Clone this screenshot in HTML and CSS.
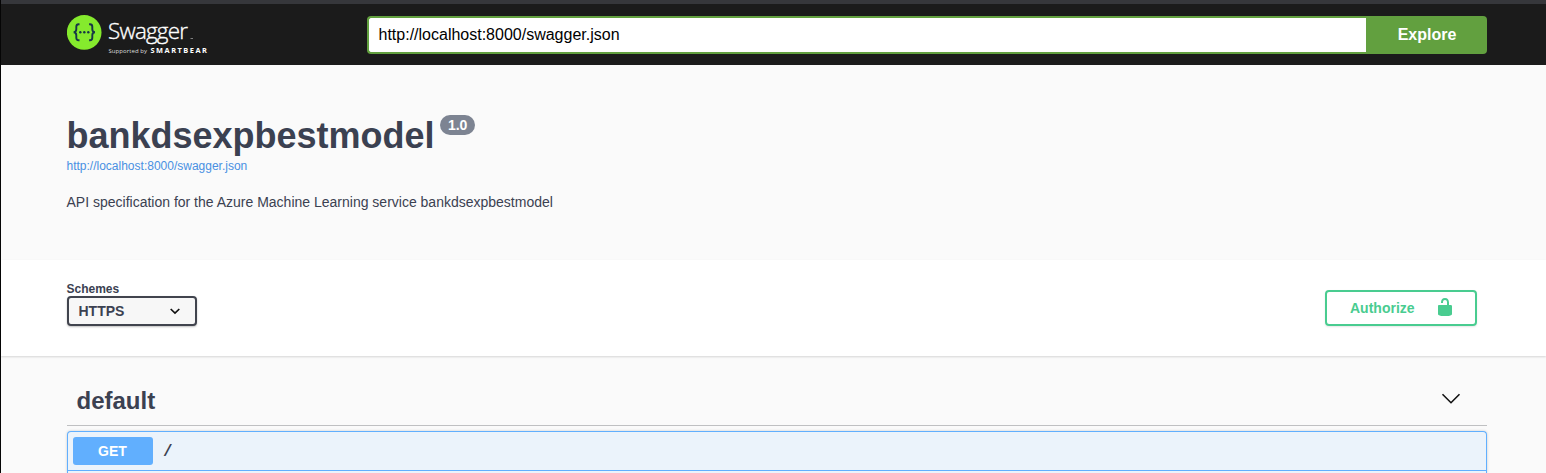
FILE: index.html
```html
<!DOCTYPE html>
<html lang="en">
<head>
<meta charset="utf-8">
<title>Swagger UI</title>
<link rel="stylesheet" href="styles.css">
</head>
<body>
<header class="topbar">
  <div class="wrapper topbar-wrapper">
    <a class="logo" aria-label="Swagger">
      <svg width="150" height="44" viewBox="0 0 150 44">
        <circle cx="17.2" cy="17.4" r="17.3" fill="#85ea2d"/>
        <g fill="none" stroke="#173647" stroke-width="1.9">
          <path d="M12.500 9.300h-.9c-1.700 0-2.300.9-2.300 2.500v2.500c0 1.900-.7 2.800-2.600 3 1.900.2 2.600 1.100 2.600 3v2.500c0 1.600.6 2.500 2.300 2.500h.9"/>
          <path d="M22.100 9.300h.9c1.700 0 2.300.9 2.300 2.500v2.500c0 1.900.7 2.800 2.600 3-1.900.2-2.600 1.100-2.600 3v2.500c0 1.600-.6 2.500-2.300 2.500h-.9"/>
        </g>
        <g fill="#173647"><circle cx="13.300" cy="17.300" r="1.200"/><circle cx="17.300" cy="17.300" r="1.200"/><circle cx="21.300" cy="17.300" r="1.200"/></g>
        <text class="logo-name" x="41" y="24.200" textLength="80">Swagger</text>
        <path d="M123.500 23.500h2.500" stroke="#999" stroke-width=".8"/>
        <text class="logo-by" x="41.500" y="38" textLength="38.500">Supported by</text>
        <text class="logo-brand" x="83.500" y="38" textLength="56.500">SMARTBEAR</text>
      </svg>
    </a>
    <form class="search">
      <div class="url">http://localhost:8000/swagger.json</div>
      <div class="explore">Explore</div>
    </form>
  </div>
</header>
<section class="info">
  <div class="wrapper">
    <h1 class="title"><span class="title-text">bankdsexpbestmodel</span><span class="version">1.0</span></h1>
    <a class="spec-link">http://localhost:8000/swagger.json</a>
    <p class="description">API specification for the Azure Machine Learning service bankdsexpbestmodel</p>
  </div>
</section>
<section class="schemes">
  <div class="wrapper schemes-wrapper">
    <div class="scheme-group">
      <div class="scheme-label">Schemes</div>
      <div class="select">HTTPS
        <svg width="12" height="8" viewBox="0 0 12 8"><path d="M1.700 2 6 6l4.300-4" fill="none" stroke="#111" stroke-width="1.700"/></svg>
      </div>
    </div>
    <div class="authorize"><span>Authorize</span>
      <svg width="20" height="20" viewBox="0 0 20 20"><path fill="#49cc90" d="M15.800 8H14V5.600C14 2.700 12.700 1 10 1 7.200 1 6 2.700 6 5.600V6h2v-.8C8 3.700 8.800 3 10 3c1.200 0 2 .7 2 2.200V8H4c-.6 0-1 .5-1 1.200V17c0 .5.500 1.200 1 1.300l1.400.5c.5.200 1 .2 1.400.2h6.400c.5 0 1 0 1.400-.2l1.400-.5c.5-.1 1-.8 1-1.300V9.200c0-.7-.7-1.200-1.200-1.200z"/></svg>
    </div>
  </div>
</section>
<main class="wrapper operations">
  <h2 class="tag"><span class="tag-text">default</span>
    <svg width="20" height="12" viewBox="0 0 20 12"><path d="M1.500 1.200 10 9.700l8.500-8.500" fill="none" stroke="#111" stroke-width="1.600"/></svg>
  </h2>
  <div class="opblock">
    <div class="summary"><span class="method">GET</span><span class="path">/</span></div>
  </div>
</main>
</body>
</html>
```
FILE: styles.css
```css
* { box-sizing: border-box; }
html { background: #fafafa; }
body {
  margin: 0;
  height: 473px;
  overflow: hidden;
  border-left: 1px solid #050505;
  background: #fafafa;
  color: #3b4151;
  font-family: "Liberation Sans", Arial, sans-serif;
}
.wrapper { margin: 0 59px 0 66px; }
.topbar {
  height: 65px;
  padding-top: 11px;
  border-top: 4px solid #36373b;
  background: #1b1b1b;
}
.topbar-wrapper { display: flex; }
.logo { width: 300px; height: 44px; }
.logo svg { display: block; }
.logo-name { font: 300 22.4px "Open Sans", sans-serif; fill: #fff; stroke: #fff; stroke-width: .35px; }
.logo-by { font: 6px "Open Sans", sans-serif; fill: #ddd; }
.logo-brand { font: 700 7.4px "Open Sans", sans-serif; fill: #fff; }
.search { display: flex; flex: 1; height: 38px; margin-top: 1px; }
.url {
  flex: 1;
  border: 2px solid #62a03f;
  border-right: 0;
  border-radius: 4px 0 0 4px;
  padding-left: 9.5px;
  background: #fff;
  color: #000;
  font-size: 16px;
  line-height: 34px;
}
.explore {
  width: 121px;
  padding-left: 1px;
  border-radius: 0 4px 4px 0;
  background: #62a03f;
  color: #fff;
  font-size: 16px;
  font-weight: bold;
  line-height: 37px;
  text-align: center;
}
.info { height: 195px; padding-top: 50px; }
.info .wrapper { margin-left: 65.5px; }
.title { display: flex; align-items: flex-start; margin: 0; height: 43px; font-size: 36px; line-height: 41px; }
.version {
  width: 35px;
  height: 20px;
  margin-left: 5.5px;
  border-radius: 10px;
  background: #7d8492;
  color: #fff;
  font-size: 14px;
  line-height: 20px;
  text-align: center;
}
.spec-link { display: block; height: 16px; color: #4990e2; font-size: 12px; line-height: 16px; }
.description { margin: 20px 0 0; font-size: 14px; line-height: 16px; }
.schemes { height: 96px; background: #fff; box-shadow: 0 1px 2px rgba(0, 0, 0, .15); }
.schemes-wrapper { display: flex; justify-content: space-between; padding: 22px 10px 0 0; }
.scheme-label { height: 14px; margin-left: -.5px; font-size: 12px; font-weight: bold; line-height: 14px; }
.select {
  display: flex;
  align-items: center;
  justify-content: space-between;
  width: 130px;
  height: 30px;
  padding: 0 14px 0 9.5px;
  border: 2px solid #41444e;
  border-radius: 4px;
  background: #f7f7f7;
  box-shadow: 0 1px 2px rgba(0, 0, 0, .25);
  font-size: 14px;
  font-weight: bold;
}
.authorize {
  display: flex;
  justify-content: space-between;
  width: 152px;
  height: 36px;
  margin-top: 8px;
  padding: 5px 20px 0 23px;
  border: 2px solid #49cc90;
  border-radius: 4px;
  box-shadow: 0 1px 2px rgba(0, 0, 0, .1);
  color: #49cc90;
  font-size: 14px;
  font-weight: bold;
  line-height: 22px;
}
.tag {
  display: flex;
  justify-content: space-between;
  height: 70px;
  margin: 0 0 5px;
  padding: 30px 26px 0 9.5px;
  border-bottom: 1px solid #bfc0c2;
  font-size: 24px;
  line-height: 30px;
}
.tag svg { margin-top: 7px; }
.opblock {
  height: 42px;
  border: 1px solid #61affe;
  border-bottom: 0;
  border-radius: 4px 4px 0 0;
  background: #ebf3fb;
  box-shadow: 0 0 3px rgba(0, 0, 0, .19);
}
.summary { display: flex; align-items: center; height: 39px; padding-left: 5px; border-bottom: 1px solid #61affe; }
.method {
  width: 80px;
  height: 28px;
  padding-right: 1px;
  border-radius: 3px;
  background: #61affe;
  color: #fff;
  font-size: 14px;
  font-weight: bold;
  line-height: 28px;
  text-align: center;
}
.path { margin: 2px 0 0 10px; font: bold 16px "Liberation Mono", monospace; }
```
